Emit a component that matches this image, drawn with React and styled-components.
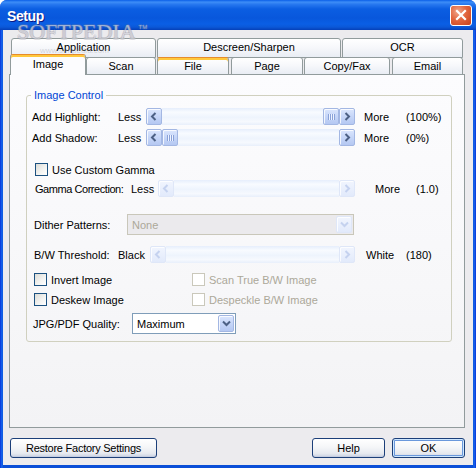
import React from "react";
import styled, { createGlobalStyle } from "styled-components";

const GlobalStyle = createGlobalStyle`
  html, body {
    margin: 0;
    padding: 0;
    background: #ffffff;
  }
  body {
    font-family: "Liberation Sans", Arial, sans-serif;
    font-size: 11px;
    color: #000;
  }
`;

const Window = styled.div`
  position: relative;
  width: 476px;
  height: 468px;
  display: flex;
  flex-direction: column;
  background: linear-gradient(to right, #0831d9 0, #166aee 2px, #0a4ed7 3px, #0a4ed7 473px, #166aee 474px, #0831d9 476px);
  border-radius: 7px 7px 0 0;
  overflow: hidden;
`;

const TitleBar = styled.div`
  flex: none;
  height: 30px;
  display: flex;
  align-items: center;
  padding: 1px 4px 0 7px;
  box-sizing: border-box;
  background: linear-gradient(
    to bottom,
    #0a5fe8 0%,
    #3d8df7 7%,
    #2677ef 15%,
    #0b5ee2 30%,
    #0857dc 60%,
    #0a5fe5 80%,
    #0b58d8 90%,
    #0540b8 100%
  );
`;

const Title = styled.span`
  flex: 1;
  font-family: "Liberation Sans", Arial, sans-serif;
  font-weight: bold;
  font-size: 14px;
  letter-spacing: -0.4px;
  color: #ffffff;
  text-shadow: 1px 1px 0 #0a1883;
`;

const CloseButton = styled.div`
  width: 22px;
  height: 21px;
  box-sizing: border-box;
  margin-top: -1px;
  border: 1px solid #ffffff;
  border-radius: 3px;
  display: flex;
  align-items: center;
  justify-content: center;
  background: radial-gradient(circle at 35% 30%, #f0a68c 0%, #e2663f 45%, #c8401a 100%);
`;

const Watermark = styled.div`
  position: absolute;
  z-index: 5;
  left: 17px;
  top: 19px;
  font-family: "Liberation Serif", "Times New Roman", serif;
  font-size: 22px;
  line-height: 16px;
  height: 16px;
  color: rgba(246, 246, 250, 0.5);
  text-shadow: 1px 0 0 rgba(130, 130, 145, 0.3), -1px 0 0 rgba(130, 130, 145, 0.3),
    0 1px 0 rgba(130, 130, 145, 0.3), 0 -1px 0 rgba(130, 130, 145, 0.3);
  pointer-events: none;
  white-space: nowrap;
`;

const Tm = styled.span`
  font-family: "Liberation Sans", Arial, sans-serif;
  font-size: 6px;
  vertical-align: 10px;
  margin-left: 3px;
`;

const WatermarkUrl = styled.div`
  position: absolute;
  z-index: 5;
  left: 40px;
  top: 46px;
  font-family: "Liberation Sans", Arial, sans-serif;
  font-size: 8px;
  color: rgba(150, 150, 160, 0.35);
  pointer-events: none;
`;

const Client = styled.div`
  flex: 1;
  margin: 0 3px 3px;
  background: #ecebee;
  display: flex;
  flex-direction: column;
  padding-top: 8px;
`;

const TabStrip = styled.div`
  margin-left: 6px;
  height: 36px;
  display: flex;
  flex-direction: column;
`;

const TabRow = styled.div`
  display: flex;
  align-items: flex-start;
  height: ${(p) => p.$h}px;
`;

const Tab = styled.div`
  position: relative;
  flex: none;
  box-sizing: border-box;
  width: ${(p) => p.$w}px;
  margin-left: ${(p) => p.$ml || 0}px;
  height: ${(p) => (p.$selected ? 21 : p.$tall ? 20 : 18)}px;
  margin-top: ${(p) => (p.$selected ? -3 : 0)}px;
  z-index: ${(p) => (p.$selected ? 2 : 1)};
  display: flex;
  align-items: center;
  justify-content: center;
  padding-bottom: ${(p) => (p.$selected ? 3 : p.$tall ? 2 : 0)}px;
  border: 1px solid #919b9c;
  border-bottom: ${(p) => (p.$selected ? "none" : "1px solid #919b9c")};
  border-top-color: ${(p) => (p.$hot ? "#e68b2c" : "#919b9c")};
  border-radius: 3px 3px 0 0;
  background: ${(p) =>
    p.$selected
      ? "#fcfcfe"
      : "linear-gradient(to bottom, #ffffff 0%, #f7f8fb 45%, #e9edf4 100%)"};
  box-shadow: ${(p) => (p.$hot ? "inset 0 2px 0 #ffc83c" : "none")};
  color: #000;
  white-space: nowrap;
`;

const Panel = styled.div`
  width: 456px;
  height: 354px;
  margin-left: 6px;
  box-sizing: border-box;
  border: 1px solid #919b9c;
  background: linear-gradient(to bottom, #fcfcfe 0%, #f7f7f9 60%, #f3f3f5 100%);
  padding: 14px 0 0 16px;
`;

const GroupBox = styled.fieldset`
  width: 426px;
  box-sizing: border-box;
  margin: 0;
  padding: 0 0 7px;
  border: 1px solid #d0d0bf;
  border-radius: 3px;
  min-inline-size: 0;
`;

const Legend = styled.legend`
  margin-left: 4px;
  padding: 0 3px;
  line-height: 13px;
  color: #0046d5;
`;

const Row = styled.div`
  display: flex;
  align-items: center;
  height: ${(p) => p.$h}px;
  margin-top: ${(p) => p.$mt}px;
  padding-left: ${(p) => p.$pl}px;
  white-space: nowrap;
`;

const Label = styled.span`
  flex: none;
  width: ${(p) => (p.$w ? `${p.$w}px` : "auto")};
  margin-left: ${(p) => p.$ml || 0}px;
  letter-spacing: ${(p) => (p.$tight ? "-0.45px" : "normal")};
  color: ${(p) => (p.$disabled ? "#aca899" : "#000")};
`;

const Scroll = styled.div`
  flex: none;
  display: flex;
  width: ${(p) => p.$w}px;
  height: 17px;
`;

const Track = styled.div`
  flex: 1;
  display: flex;
  justify-content: ${(p) => (p.$thumb === "right" ? "flex-end" : "flex-start")};
  background: linear-gradient(
    to bottom,
    #e6eefc 0%,
    #f8fbff 25%,
    #eef4fd 55%,
    #f6f9fe 80%,
    #e8effb 100%
  );
`;

const ScrollButton = styled.div`
  flex: none;
  width: 16px;
  height: 17px;
  box-sizing: border-box;
  border: 1px solid ${(p) => (p.$disabled ? "#dfe7f8" : "#a3b7e3")};
  border-radius: 2px;
  display: flex;
  align-items: center;
  justify-content: center;
  background: ${(p) =>
    p.$disabled
      ? "linear-gradient(to bottom, #f1f5fe, #e2eafb)"
      : "linear-gradient(to bottom, #dbe6fd 0%, #c6d6f8 50%, #b5c8f2 100%)"};
  box-shadow: inset 1px 1px 0 rgba(255, 255, 255, 0.8);
`;

const Grip = styled.span`
  width: 7px;
  height: 6px;
  background: repeating-linear-gradient(to right, #8aa2d8 0 1px, #eef3ff 1px 2px);
`;

const Check = styled.span`
  flex: none;
  width: 13px;
  height: 13px;
  box-sizing: border-box;
  border: 1px solid ${(p) => (p.$disabled ? "#cac8bb" : "#1c5180")};
  background: ${(p) =>
    p.$disabled ? "#ffffff" : "linear-gradient(135deg, #dcdcd7 0%, #f4f4f2 60%, #ffffff 100%)"};
  margin-right: 4px;
`;

const CheckItem = styled.div`
  flex: none;
  display: flex;
  align-items: center;
  width: ${(p) => (p.$w ? `${p.$w}px` : "auto")};
  color: ${(p) => (p.$disabled ? "#aca899" : "#000")};
`;

const Combo = styled.div`
  flex: none;
  display: flex;
  align-items: center;
  width: ${(p) => p.$w}px;
  height: 21px;
  box-sizing: border-box;
  border: 1px solid ${(p) => (p.$disabled ? "#c9c7ba" : "#7f9db9")};
  background: ${(p) => (p.$disabled ? "#ebeaed" : "#ffffff")};
  color: ${(p) => (p.$disabled ? "#aca899" : "#000")};
`;

const ComboText = styled.span`
  flex: 1;
  padding-left: 4px;
`;

const ComboButton = styled(ScrollButton)`
  width: 16px;
  height: 17px;
  margin: 1px;
`;

const Footer = styled.div`
  display: flex;
  align-items: center;
  margin-top: 10px;
  padding: 0 8px 0 7px;
`;

const Button = styled.button`
  flex: none;
  width: ${(p) => p.$w}px;
  height: 20px;
  margin-left: ${(p) => p.$ml || "0"};
  box-sizing: border-box;
  padding: 0;
  font-family: "Liberation Sans", Arial, sans-serif;
  font-size: 11px;
  letter-spacing: ${(p) => (p.$tight ? "-0.25px" : "normal")};
  color: #000;
  border: 1px solid #1c3f79;
  border-radius: 3px;
  background: linear-gradient(to bottom, #ffffff 0%, #f5f6f8 45%, #e6e9ef 80%, #c9d1e2 100%);
  box-shadow: ${(p) =>
    p.$default
      ? "inset 0 0 0 1px #cee7ff, inset 0 0 0 2px #6a98dc"
      : "inset 0 -1px 0 #c5cde0"};
`;

function Arrow({ dir, disabled }) {
  const color = disabled ? "#c5d2ef" : "#4d6185";
  const pts = {
    left: "5.5,1 2,4.5 5.5,8",
    right: "2.5,1 6,4.5 2.5,8",
    down: "1,2.5 4.5,6 8,2.5",
  }[dir];
  return (
    <svg width="9" height="9" viewBox="0 0 9 9">
      <polyline points={pts} fill="none" stroke={color} strokeWidth="2" />
    </svg>
  );
}

function ScrollBar({ w, thumb, disabled }) {
  return (
    <Scroll $w={w}>
      <ScrollButton $disabled={disabled}>
        <Arrow dir="left" disabled={disabled} />
      </ScrollButton>
      <Track $thumb={thumb}>
        {thumb && (
          <ScrollButton>
            <Grip />
          </ScrollButton>
        )}
      </Track>
      <ScrollButton $disabled={disabled}>
        <Arrow dir="right" disabled={disabled} />
      </ScrollButton>
    </Scroll>
  );
}

const topTabs = [
  { label: "Application", w: 145, ml: 2 },
  { label: "Descreen/Sharpen", w: 184, ml: 1 },
  { label: "OCR", w: 121, ml: 1 },
];

const bottomTabs = [
  { label: "Image", w: 76, ml: 1, selected: true, hot: true },
  { label: "Scan", w: 70, ml: 0 },
  { label: "File", w: 72, ml: 1, hot: true },
  { label: "Page", w: 72, ml: 2 },
  { label: "Copy/Fax", w: 86, ml: 1 },
  { label: "Email", w: 71, ml: 2 },
];

export default function App() {
  return (
    <>
      <GlobalStyle />
      <Window>
        <TitleBar>
          <Title>Setup</Title>
          <CloseButton>
            <svg width="12" height="12" viewBox="0 0 12 12">
              <path d="M2 2 L10 10 M10 2 L2 10" stroke="#ffffff" strokeWidth="2.2" strokeLinecap="square" />
            </svg>
          </CloseButton>
        </TitleBar>
        <Watermark>
          SOFTPEDIA<Tm>TM</Tm>
        </Watermark>
        <WatermarkUrl>www.softpedia.com</WatermarkUrl>
        <Client>
          <TabStrip>
            <TabRow $h={19}>
              {topTabs.map((t) => (
                <Tab key={t.label} $w={t.w} $ml={t.ml} $tall>
                  {t.label}
                </Tab>
              ))}
            </TabRow>
            <TabRow $h={17}>
              {bottomTabs.map((t) => (
                <Tab key={t.label} $w={t.w} $ml={t.ml} $selected={t.selected} $hot={t.hot}>
                  {t.label}
                </Tab>
              ))}
            </TabRow>
          </TabStrip>
          <Panel>
            <GroupBox>
              <Legend>Image Control</Legend>
              <Row $h={17} $mt={6} $pl={5}>
                <Label $w={86}>Add Highlight:</Label>
                <Label $w={28}>Less</Label>
                <ScrollBar w={209} thumb="right" />
                <Label $w={42} $ml={9}>More</Label>
                <Label>(100%)</Label>
              </Row>
              <Row $h={17} $mt={4} $pl={5}>
                <Label $w={86}>Add Shadow:</Label>
                <Label $w={28}>Less</Label>
                <ScrollBar w={209} thumb="left" />
                <Label $w={42} $ml={9}>More</Label>
                <Label>(0%)</Label>
              </Row>
              <Row $h={13} $mt={17} $pl={8}>
                <CheckItem>
                  <Check />
                  Use Custom Gamma
                </CheckItem>
              </Row>
              <Row $h={17} $mt={4} $pl={8}>
                <Label $w={96} $tight>Gamma Correction:</Label>
                <Label $w={27}>Less</Label>
                <ScrollBar w={197} disabled />
                <Label $w={41} $ml={20}>More</Label>
                <Label>(1.0)</Label>
              </Row>
              <Row $h={21} $mt={17} $pl={7}>
                <Label $w={93}>Dither Patterns:</Label>
                <Combo $w={227} $disabled>
                  <ComboText>None</ComboText>
                  <ComboButton $disabled>
                    <Arrow dir="down" disabled />
                  </ComboButton>
                </Combo>
              </Row>
              <Row $h={17} $mt={11} $pl={7}>
                <Label $w={84}>B/W Threshold:</Label>
                <Label $w={32}>Black</Label>
                <ScrollBar w={205} disabled />
                <Label $w={40} $ml={11}>White</Label>
                <Label>(180)</Label>
              </Row>
              <Row $h={13} $mt={10} $pl={7}>
                <CheckItem $w={158}>
                  <Check />
                  Invert Image
                </CheckItem>
                <CheckItem $disabled>
                  <Check $disabled />
                  Scan True B/W Image
                </CheckItem>
              </Row>
              <Row $h={13} $mt={7} $pl={7}>
                <CheckItem $w={158}>
                  <Check />
                  Deskew Image
                </CheckItem>
                <CheckItem $disabled>
                  <Check $disabled />
                  Despeckle B/W Image
                </CheckItem>
              </Row>
              <Row $h={21} $mt={7} $pl={6}>
                <Label $w={99}>JPG/PDF Quality:</Label>
                <Combo $w={104}>
                  <ComboText>Maximum</ComboText>
                  <ComboButton>
                    <Arrow dir="down" />
                  </ComboButton>
                </Combo>
              </Row>
            </GroupBox>
          </Panel>
          <Footer>
            <Button $w={147} $tight>Restore Factory Settings</Button>
            <Button $w={73} $ml="auto">Help</Button>
            <Button $w={73} $ml="7px" $default>OK</Button>
          </Footer>
        </Client>
      </Window>
    </>
  );
}
